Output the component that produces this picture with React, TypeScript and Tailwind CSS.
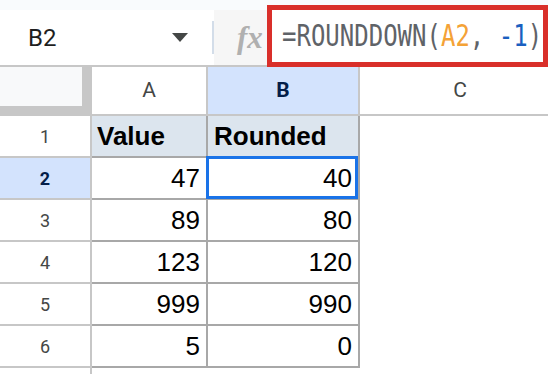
import React from "react";

const rows = [
  { n: 1, a: "Value", b: "Rounded", head: true },
  { n: 2, a: "47", b: "40" },
  { n: 3, a: "89", b: "80" },
  { n: 4, a: "123", b: "120" },
  { n: 5, a: "999", b: "990" },
  { n: 6, a: "5", b: "0" },
];

const FormulaBar = () => (
  <div className="flex h-[67px] bg-[#f9fbfd]">
    <div className="mt-[10px] flex w-[214px] shrink-0 items-center border-b-2 border-[#c7c7c7] bg-white">
      <span className="flex-1 pl-[28px] font-['Roboto',sans-serif] text-[24px] text-[#1f1f1f]">
        B2
      </span>
      <svg width="16" height="9" viewBox="0 0 16 9" className="mr-[24px]">
        <path d="M0 0 L16 0 L8 9 Z" fill="#444746" />
      </svg>
      <div className="h-[33px] w-[2px] bg-[#d3dde9]" />
    </div>
    <div className="mt-[10px] flex w-[53px] shrink-0 items-center border-b-2 border-[#c7c7c7] bg-[#f6f6f6] pl-[23px]">
      <span className="font-['Liberation_Serif',serif] text-[31px] font-bold italic leading-none text-[#b0b0b0]">
        fx
      </span>
    </div>
    <div className="mt-[5px] flex h-[62px] w-[281px] shrink-0 items-center overflow-hidden border-[5px] border-[#d92f2a] bg-white pl-[10px]">
      <span className="inline-block origin-left scale-x-[0.8] whitespace-pre font-['DejaVu_Sans_Mono',monospace] text-[30px] leading-none text-[#5f6368]">
        =ROUNDDOWN(<span className="text-[#f4a236]">A2</span>,{" "}
        <span className="text-[#1a5fc0]">-1</span>)
      </span>
    </div>
  </div>
);

const ColumnHeaders = () => (
  <div className="flex h-[49px] font-['Roboto',sans-serif] text-[21px] text-[#444746]">
    <div className="h-[49px] w-[92px] shrink-0 border-b-[10px] border-r-[10px] border-[#c7c7c7] bg-[#f8f9fa]" />
    <div className="flex w-[116px] shrink-0 items-center justify-center border-b-2 border-r-2 border-[#c7c7c7] bg-white">
      A
    </div>
    <div className="flex w-[152px] shrink-0 items-center justify-center border-b-2 border-r-2 border-[#c7c7c7] bg-[#d3e3fd] font-bold text-[#041e49]">
      B
    </div>
    <div className="flex w-[200px] shrink-0 items-center justify-center border-b-2 border-[#c7c7c7] bg-white">
      C
    </div>
  </div>
);

export default function App() {
  return (
    <div className="h-[374px] w-[548px] overflow-hidden bg-white">
      <FormulaBar />
      <ColumnHeaders />
      {rows.map((r) => {
        const selected = r.n === 2;
        return (
          <div key={r.n} className="flex h-[42px]">
            <div
              className={
                selected
                  ? "flex w-[92px] shrink-0 items-center justify-center border-b-2 border-r-2 border-[#c7c7c7] bg-[#d3e3fd] font-['Roboto',sans-serif] text-[18px] font-bold text-[#041e49]"
                  : "flex w-[92px] shrink-0 items-center justify-center border-b-2 border-r-2 border-[#c7c7c7] bg-white font-['Roboto',sans-serif] text-[18px] text-[#444746]"
              }
            >
              {r.n}
            </div>
            <div
              className={
                r.head
                  ? "flex w-[116px] shrink-0 items-center border-b-2 border-r-2 border-[#a8a8a8] bg-[#dce5ee] pl-[5px] font-['Liberation_Sans',sans-serif] text-[26px] font-bold text-black"
                  : "flex w-[116px] shrink-0 items-center justify-end border-b-2 border-r-2 border-[#a8a8a8] bg-white pr-[6px] font-['Liberation_Sans',sans-serif] text-[26px] text-black"
              }
            >
              {r.a}
            </div>
            <div
              className={
                r.head
                  ? "relative flex w-[152px] shrink-0 items-center border-b-2 border-r-2 border-[#a8a8a8] bg-[#dce5ee] pl-[6px] font-['Liberation_Sans',sans-serif] text-[26px] font-bold text-black"
                  : "relative flex w-[152px] shrink-0 items-center justify-end border-b-2 border-r-2 border-[#a8a8a8] bg-white pr-[6px] font-['Liberation_Sans',sans-serif] text-[26px] text-black"
              }
            >
              {r.b}
              {selected && (
                <div className="absolute -bottom-[1px] -left-[2px] -top-[2px] right-0 border-[3px] border-[#1a73e8]" />
              )}
            </div>
          </div>
        );
      })}
      <div className="flex h-[20px]">
        <div className="w-[92px] shrink-0 border-r-2 border-[#c7c7c7]" />
      </div>
    </div>
  );
}
